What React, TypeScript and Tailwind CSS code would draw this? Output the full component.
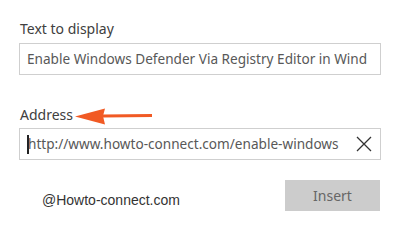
import React from "react";

export default function App() {
  return (
    <div className="relative w-[402px] h-[224px] bg-white overflow-hidden" style={{ fontFamily: '"Noto Sans", sans-serif' }}>
      <div className="flex flex-col pl-[19px] pr-[21px] pt-[19px]">
        <div className="text-[14px] leading-[20px] text-[#404040] pl-[1px]">Text to display</div>
        <div className="mt-[4px] h-[32px] border border-[#cfcfcf] flex items-center pl-[7px] overflow-hidden whitespace-nowrap text-[13.6px] text-[#585858]">
          Enable Windows Defender Via Registry Editor in Wind
        </div>
        <div className="mt-[30px] text-[14px] leading-[20px] text-[#404040] pl-[1px]">Address</div>
        <div className="mt-[3px] h-[32px] border border-[#cfcfcf] flex items-center overflow-hidden whitespace-nowrap text-[13.6px] text-[#585858]">
          <div className="ml-[7px] w-[2px] h-[19px] bg-[#222222] shrink-0" />
          <div className="flex-1 overflow-hidden -ml-[1px]">http://www.howto-connect.com/enable-windows</div>
          <svg width="16" height="16" viewBox="0 0 16 16" className="shrink-0 mx-[8px]">
            <path d="M1 1 L15 15 M15 1 L1 15" stroke="#333" strokeWidth="1.3" fill="none" />
          </svg>
        </div>
        <div className="mt-[20px] flex items-start justify-between">
          <div className="ml-[23px] mt-[10px] text-[14px] leading-[20px] text-[#333333]" style={{ fontFamily: '"Liberation Sans", Arial, sans-serif' }}>@Howto-connect.com</div>
          <div className="mr-[1px] w-[95px] h-[31px] bg-[#cccccc] flex items-center justify-center text-[14px] text-[#666666]">Insert</div>
        </div>
      </div>
      <svg className="absolute left-[74px] top-[106px]" width="82" height="20" viewBox="0 0 82 20">
        <path d="M1 10.5 L31 2.5 L29 10 L31 18.5 Z" fill="#f15a24" />
        <path d="M29 8.5 L78 8 L78 11 L29 11.5 Z" fill="#f15a24" />
      </svg>
    </div>
  );
}
